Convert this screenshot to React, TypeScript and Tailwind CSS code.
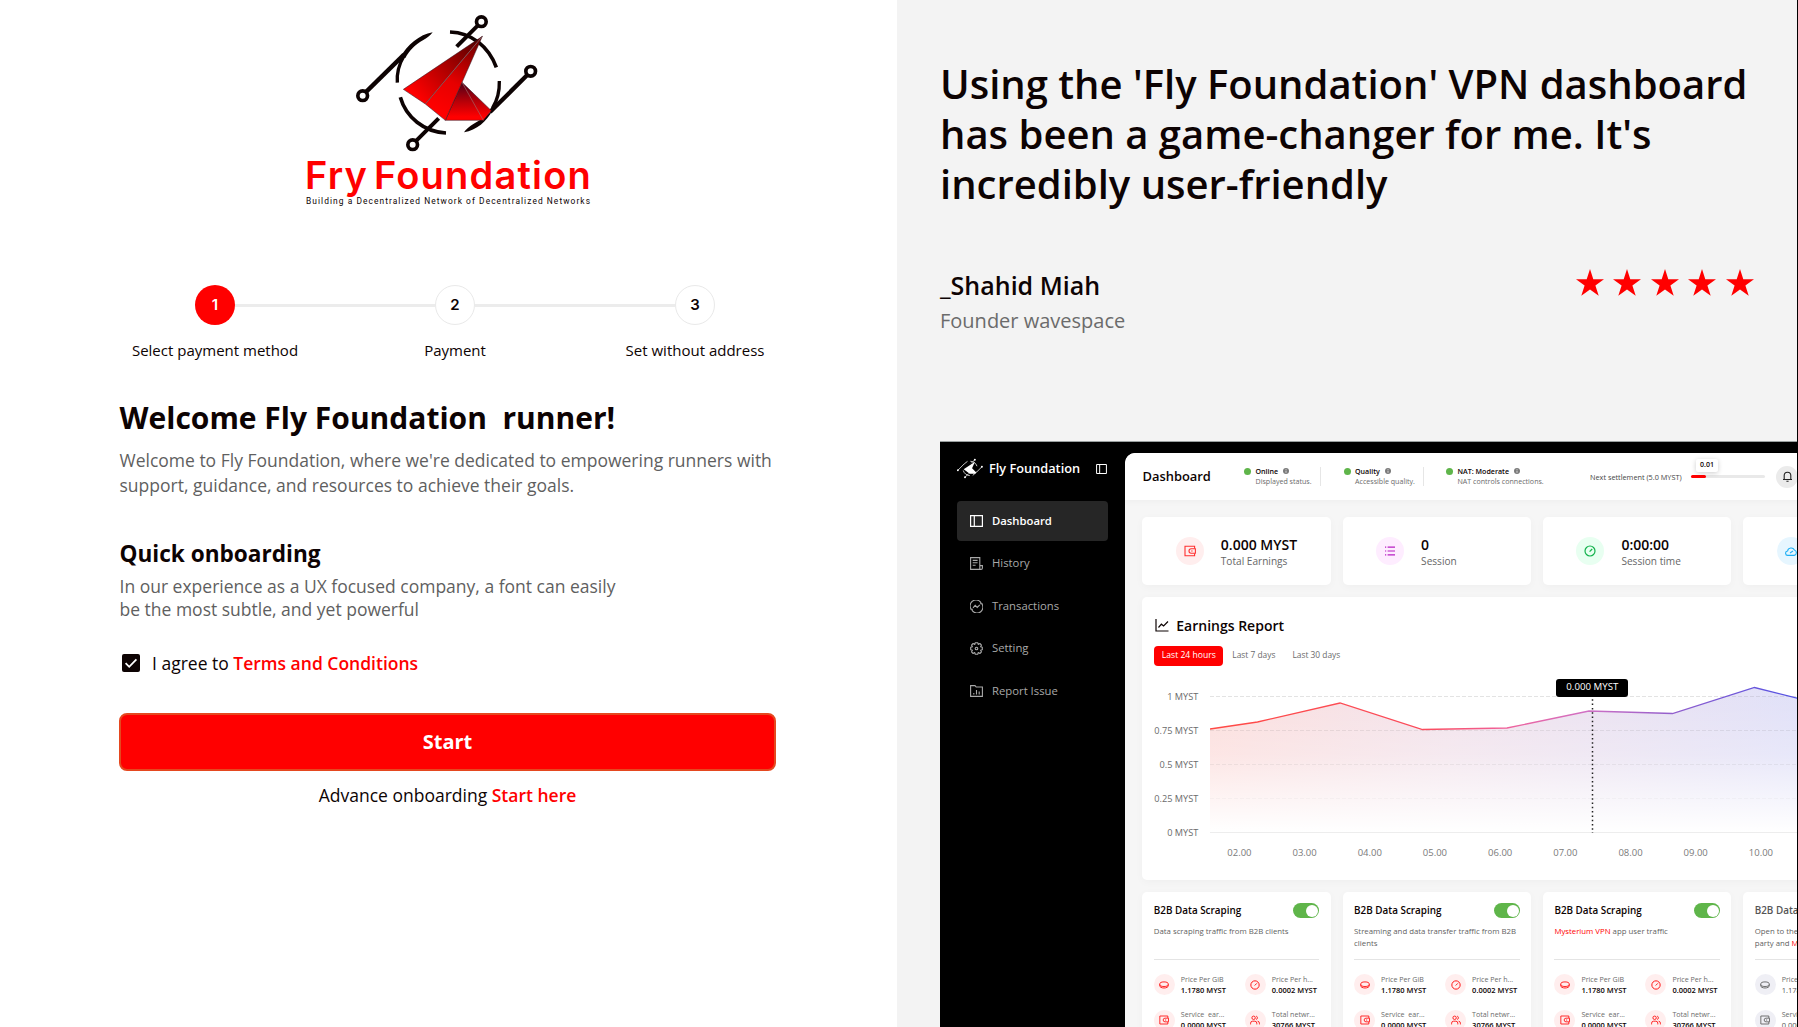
import React from "react";

function Logo() {
  return (
    <svg className="ml-[3px] block h-[160px] w-[320px]" viewBox="0 0 960 480" fill="none">
      <defs>
        <linearGradient id="wingA" x1="380" y1="290" x2="560" y2="130" gradientUnits="userSpaceOnUse">
          <stop offset="0" stopColor="#ff0000" />
          <stop offset="0.55" stopColor="#a80000" />
          <stop offset="1" stopColor="#5a0000" />
        </linearGradient>
        <linearGradient id="wingB" x1="450" y1="340" x2="570" y2="120" gradientUnits="userSpaceOnUse">
          <stop offset="0" stopColor="#ff0000" />
          <stop offset="0.4" stopColor="#e60000" />
          <stop offset="1" stopColor="#6a0000" />
        </linearGradient>
        <linearGradient id="wingC" x1="520" y1="250" x2="520" y2="350" gradientUnits="userSpaceOnUse">
          <stop offset="0" stopColor="#520018" />
          <stop offset="0.55" stopColor="#b80008" />
          <stop offset="1" stopColor="#ff0000" />
        </linearGradient>
      </defs>
      <g stroke="#0d0303" strokeWidth="11">
        <circle cx="574" cy="65" r="14.5" />
        <circle cx="722" cy="214" r="14.5" />
        <circle cx="218" cy="287" r="14.5" />
        <circle cx="368" cy="434" r="14.5" />
        <path d="M563 77 500 140" strokeWidth="12" />
        <path d="M711 226 600 336" strokeWidth="13" />
        <path d="M229 275 342 164" strokeWidth="13" />
        <path d="M379 422 446 355" strokeWidth="12" />
        <path d="M480 96 C545 98 596 140 619 202" />
        <path d="M331 292 C348 352 402 396 468 399" />
        <path d="M342 168 C326 194 320 220 322 248" strokeWidth="10" />
        <path d="M628 243 C629 275 621 303 607 325" strokeWidth="10" />
      </g>
      <g fill="#0d0303">
        <path d="M330 174 C352 134 388 104 428 97 C420 108 410 114 400 120 C375 134 358 152 346 174Z" />
        <path d="M522 397 C535 378 560 366 585 352 L608 330 C590 365 560 390 522 397Z" />
      </g>
      <g stroke="#2b1420" strokeWidth="1.5" strokeLinejoin="round">
        <path d="M516 247 604 332 580 361 466 361Z" fill="url(#wingC)" />
        <path d="M577 109 340 268 406 312Z" fill="url(#wingA)" />
        <path d="M577 109 406 312 466 361Z" fill="url(#wingB)" />
      </g>
      <path d="M577 109 406 312M516 247 580 361" stroke="#a06a6a" strokeWidth="2" />
    </svg>
  );
}

function Step({ n, label, active }: { n: number; label: string; active?: boolean }) {
  return (
    <div className="flex w-10 flex-col items-center">
      <div
        className={
          active
            ? "flex h-10 w-10 items-center justify-center rounded-full bg-[#ff0000] font-['Inter',sans-serif] text-[15px] font-semibold text-white"
            : "flex h-10 w-10 items-center justify-center rounded-full border border-[#e9e9e9] bg-white font-['Inter',sans-serif] text-[15px] font-semibold text-[#0d0303]"
        }
      >
        {n}
      </div>
      <div className="mt-[14px] text-[15px] leading-[22px] whitespace-nowrap text-[#0d0303]">{label}</div>
    </div>
  );
}

function LeftPanel() {
  return (
    <section className="flex h-full w-[897px] shrink-0 flex-col bg-white">
      <div className="flex h-[215px] flex-col items-center">
        <Logo />
        <div className="-mt-[2px] font-['Inter',sans-serif] text-[38px] leading-[34px] font-semibold tracking-[1.2px] [word-spacing:-5px] whitespace-nowrap text-[#ff0000]">
          Fry Foundation
        </div>
        <div className="mt-[3px] font-['Roboto',sans-serif] text-[8.4px] leading-[12px] tracking-[1.07px] whitespace-nowrap text-[#0d0303]">
          Building a Decentralized Network of Decentralized Networks
        </div>
      </div>
      <div className="ml-[195px] mt-[70px] flex h-[80px] w-[520px] items-start">
        <Step n={1} label="Select payment method" active />
        <div className="mt-[19px] h-[3px] flex-1 bg-[#ececec]" />
        <Step n={2} label="Payment" />
        <div className="mt-[19px] h-[3px] flex-1 bg-[#ececec]" />
        <Step n={3} label="Set without address" />
      </div>
      <div className="ml-[119px] w-[657px] text-[#0d0303]">
        <h1 className="mt-[32px] ml-[0.5px] h-[41px] text-[30px] leading-[41px] font-bold whitespace-pre">Welcome Fly Foundation  runner!</h1>
        <p className="mt-[10px] ml-[0.5px] text-[17.5px] leading-[25px] whitespace-nowrap text-[#5f5f5f]">
          Welcome to Fly Foundation, where we're dedicated to empowering runners with
          <br />
          support, guidance, and resources to achieve their goals.
        </p>
        <h2 className="mt-[40px] ml-[0.5px] text-[22.6px] leading-[32px] font-bold">Quick onboarding</h2>
        <p className="mt-[5px] ml-[0.5px] text-[17.5px] leading-[23px] whitespace-nowrap text-[#5f5f5f]">
          In our experience as a UX focused company, a font can easily
          <br />
          be the most subtle, and yet powerful
        </p>
        <div className="mt-[28px] flex h-[28px] items-center text-[17.5px] leading-[26px]">
          <svg className="ml-[3px] mr-3 h-[18px] w-[18px]" viewBox="0 0 18 18" fill="none">
            <rect width="18" height="18" rx="2" fill="#0d0303" />
            <path d="M3.6 9.2 7.2 12.8 14.4 5.4" stroke="#fff" strokeWidth="1.8" />
          </svg>
          <span className="whitespace-pre">I agree to </span>
          <span className="font-semibold text-[#ff0000]">Terms and Conditions</span>
        </div>
        <button className="mt-[36px] flex h-[58px] w-full items-center justify-center rounded-[8px] border-2 border-[#e5481f] bg-[#ff0000] text-[20px] font-bold text-white">
          Start
        </button>
        <div className="mt-[11px] text-center text-[17.5px] leading-[26px]">
          Advance onboarding <span className="font-semibold text-[#ff0000]">Start here</span>
        </div>
      </div>
    </section>
  );
}

function Star() {
  return (
    <svg className="h-[27px] w-[28px]" viewBox="0 0 28 27" fill="#ff0000">
      <path d="M14 0 17.3 10.2H28L19.4 16.5 22.7 26.7 14 20.4 5.3 26.7 8.6 16.5 0 10.2H10.7Z" />
    </svg>
  );
}

function PanelIcon({ className }: { className: string }) {
  return (
    <svg className={className} viewBox="0 0 13 12" fill="none" stroke="currentColor" strokeWidth="1.2">
      <path d="M.6.6H12.4V11.4H.6ZM4.3.6V11.4" />
    </svg>
  );
}
function HistoryIcon() {
  return (
    <svg className="h-[13px] w-[13px] shrink-0" viewBox="0 0 13 13" fill="none" stroke="currentColor" strokeWidth="1.1">
      <path d="M9.8 8V.6H.6V12.4H11a1.4 1.4 0 0 0 1.4-1.4V8.6H9.8V12M2.7 3.4H7.6M2.7 5.8H7.6M2.7 8.2H5.6" />
    </svg>
  );
}
function TransactionsIcon() {
  return (
    <svg className="h-[13px] w-[13px] shrink-0" viewBox="0 0 13 13" fill="none" stroke="currentColor" strokeWidth="1.1">
      <path d="M1.4 9.6A5.9 5.9 0 0 1 10.6 2.2M11.6 3.4A5.9 5.9 0 0 1 2.4 10.8M3 7.8 5.2 5.4 7.2 7.4 9.8 4.8M.4 9.2H2.2V11M12.6 3.8H10.8V2" />
    </svg>
  );
}
function GearIcon() {
  return (
    <svg className="h-[13px] w-[13px] shrink-0" viewBox="0 0 13 13" fill="none" stroke="currentColor" strokeWidth="1.1" strokeLinejoin="round">
      <path d="M5.3.7H7.7L8.2 2.4 9.9 1.5 11.5 3.1 10.6 4.8 12.3 5.3V7.7L10.6 8.2 11.5 9.9 9.9 11.5 8.2 10.6 7.7 12.3H5.3L4.8 10.6 3.1 11.5 1.5 9.9 2.4 8.2.7 7.7V5.3L2.4 4.8 1.5 3.1 3.1 1.5 4.8 2.4Z" />
      <circle cx="6.5" cy="6.5" r="1.3" />
    </svg>
  );
}
function ReportIcon() {
  return (
    <svg className="h-[12px] w-[13px] shrink-0" viewBox="0 0 13 12" fill="none" stroke="currentColor" strokeWidth="1.1">
      <path d="M.6.6H5L6.2 2H12.4V11.4H.6ZM3.8 9.6V8M6.5 9.6V5M9.2 9.6V6.4" />
    </svg>
  );
}
function WalletIcon({ className }: { className: string }) {
  return (
    <svg className={className} viewBox="0 0 12 12" fill="none" stroke="currentColor" strokeWidth="1.1">
      <path d="M10.6 3.6V1.2H1V10.8H10.6V8.4" />
      <path d="M11.4 3.8H7.2A2.1 2.1 0 0 0 7.2 8.2H11.4ZM7.2 6H8.6" />
    </svg>
  );
}
function ListIcon() {
  return (
    <svg className="h-[12px] w-[12px]" viewBox="0 0 12 12" fill="none" stroke="#b81fc4" strokeWidth="1.2">
      <path d="M1 2.2H2.2M3.6 2.2H11M1 6H2.2M3.6 6H11M1 9.8H2.2M3.6 9.8H11" />
    </svg>
  );
}
function GaugeIcon({ className }: { className: string }) {
  return (
    <svg className={className} viewBox="0 0 12 12" fill="none" stroke="currentColor" strokeWidth="1.2">
      <circle cx="6" cy="6" r="5" />
      <path d="M5.6 6.6 8.2 4" />
    </svg>
  );
}
function CloudIcon() {
  return (
    <svg className="h-[12px] w-[12px]" viewBox="0 0 12 12" fill="none" stroke="#1fb0f5" strokeWidth="1.1">
      <path d="M3 10.4A2.2 2.2 0 0 1 2.6 6 3.6 3.6 0 0 1 9.4 5 2.8 2.8 0 0 1 9.2 10.4ZM5 8 8 6" />
    </svg>
  );
}
function CoinIcon() {
  return (
    <svg className="h-[10px] w-[10px]" viewBox="0 0 10 10" fill="none" stroke="currentColor" strokeWidth="0.95">
      <ellipse cx="5" cy="4.2" rx="4.3" ry="2.3" />
      <path d="M.7 4.4V5.8C.7 7 2.6 8 5 8S9.3 7 9.3 5.8V4.4" />
    </svg>
  );
}
function PeopleIcon() {
  return (
    <svg className="h-[10px] w-[10px]" viewBox="0 0 10 10" fill="none" stroke="currentColor" strokeWidth="0.95">
      <circle cx="3.6" cy="2.8" r="1.7" />
      <path d="M.6 9.4V8.2A2 2 0 0 1 2.6 6.2H4.8A2 2 0 0 1 6.8 8.2V9.4M6.2 1.1A1.8 1.8 0 0 1 6.2 4.5M7.6 6.2A2 2 0 0 1 9.4 8.2V9.4" />
    </svg>
  );
}

function NavItem({ icon, label, active }: { icon: React.ReactNode; label: string; active?: boolean }) {
  return (
    <div
      className={
        active
          ? "flex h-10 items-center rounded-[4px] bg-[#262626] pl-[13px] text-[11.3px] font-semibold text-white"
          : "flex h-10 items-center pl-[13px] text-[11.3px] text-[#a9a9a9]"
      }
    >
      {icon}
      <span className="ml-[9px] whitespace-nowrap">{label}</span>
    </div>
  );
}

function Sidebar() {
  return (
    <aside className="w-[185px] shrink-0 px-[17px] pt-[14px]">
      <div className="mb-[20px] flex h-[25px] items-center text-white">
        <svg className="h-[21px] w-[26px] shrink-0" viewBox="200 40 545 420" fill="none">
          <g stroke="#fff" strokeWidth="16">
            <path d="M218 287 350 155M722 214 604 332M574 65 500 140M368 434 446 355M350 155 420 100M480 98C545 100 596 140 619 202M331 292C348 352 402 396 468 399M530 395 610 325" />
          </g>
          <circle cx="574" cy="65" r="20" fill="#fff" />
          <circle cx="722" cy="214" r="20" fill="#fff" />
          <circle cx="218" cy="287" r="20" fill="#fff" />
          <circle cx="368" cy="434" r="20" fill="#fff" />
          <path d="M577 109 340 268 466 361H580L604 332 516 247Z" fill="#fff" />
        </svg>
        <span className="mt-px ml-[6px] text-[12.75px] font-semibold whitespace-nowrap">Fly Foundation</span>
        <PanelIcon className="ml-auto mr-px h-[10px] w-[11px] shrink-0" />
      </div>
      <nav className="flex flex-col gap-[2.6px]">
        <NavItem active label="Dashboard" icon={<PanelIcon className="h-[12px] w-[13px] shrink-0" />} />
        <NavItem label="History" icon={<HistoryIcon />} />
        <NavItem label="Transactions" icon={<TransactionsIcon />} />
        <NavItem label="Setting" icon={<GearIcon />} />
        <NavItem label="Report Issue" icon={<ReportIcon />} />
      </nav>
    </aside>
  );
}

function Status({ title, text, className }: { title: string; text: string; className: string }) {
  return (
    <div className={className}>
      <span className="mt-[2px] h-[7px] w-[7px] shrink-0 rounded-full bg-[#5fb54a]" />
      <div className="ml-[4.5px] whitespace-nowrap">
        <div className="flex items-center text-[7.1px] leading-[10px] font-semibold text-[#0d0303]">
          {title}
          <svg className="ml-[5px] h-[6px] w-[6px]" viewBox="0 0 6 6">
            <circle cx="3" cy="3" r="3" fill="#7a7a7a" />
            <path d="M3 1.2V2M3 2.6V4.8" stroke="#fff" strokeWidth=".7" />
          </svg>
        </div>
        <div className="text-[7.1px] leading-[10px] text-[#6b6b6b]">{text}</div>
      </div>
    </div>
  );
}

function TopBar() {
  return (
    <header className="flex h-[47px] w-[720px] shrink-0 items-start rounded-tl-[8px] bg-white pl-[17.5px] shadow-[0_2px_6px_rgba(0,0,0,0.03)]">
      <div className="mt-[12px] w-[101.5px] text-[12.9px] leading-[23px] font-semibold text-[#0d0303]">Dashboard</div>
      <Status className="mt-[13px] flex w-[75.5px] items-start" title="Online" text="Displayed status." />
      <div className="mt-[14px] h-[19px] w-px bg-[#e6e6e6]" />
      <Status className="mt-[13px] ml-[23px] flex w-[79px] items-start" title="Quality" text="Accessible quality." />
      <div className="mt-[14px] h-[19px] w-px bg-[#e6e6e6]" />
      <Status className="mt-[13px] ml-[22.5px] flex w-[144px] items-start" title="NAT: Moderate" text="NAT controls connections." />
      <div className="mt-[18px] w-[101px] text-[7.3px] leading-[12px] whitespace-nowrap text-[#454545]">Next settlement (5.0 MYST)</div>
      <div className="relative mt-[22px] h-[3px] w-[74px] rounded-full bg-[#e9e9e9]">
        <div className="h-[3px] w-[15px] rounded-full bg-[#ff0000]" />
        <div className="absolute -top-[16px] left-[5px] flex h-[13px] w-[22px] items-center justify-center rounded-[2px] bg-white text-[7px] font-semibold text-[#0d0303] shadow-[0_1px_5px_rgba(0,0,0,0.2)]">
          0.01
        </div>
      </div>
      <div className="mt-[12.5px] ml-[11px] flex h-[22px] w-[22px] items-center justify-center rounded-full bg-[#ebebeb]">
        <svg className="h-[11px] w-[11px]" viewBox="0 0 11 11" fill="none" stroke="#222" strokeWidth="1.1">
          <path d="M1 8.5H10M2.2 8.5V4.6A3.3 3.3 0 0 1 8.8 4.6V8.5M4.4 10.3H6.6" />
        </svg>
      </div>
    </header>
  );
}

function Stat({ tint, icon, value, label }: { tint: string; icon: React.ReactNode; value: string; label: string }) {
  return (
    <div className="flex h-[68px] w-[188.5px] shrink-0 items-center rounded-[5px] bg-white pl-[33.5px] shadow-[0_2px_8px_rgba(0,0,0,0.03)]">
      <div className={tint}>{icon}</div>
      <div className="mt-[2px] ml-[17px] whitespace-nowrap">
        <div className="text-[14px] leading-[18px] font-semibold text-[#0d0303]">{value}</div>
        <div className="text-[10.1px] leading-[15px] text-[#666]">{label}</div>
      </div>
    </div>
  );
}

function Chart() {
  const line = "M0 46 47.5 39 130 20 212.5 46.5 297 45 379 28 462.5 30.5 544.5 4.5 588.5 15.5";
  return (
    <svg className="block h-[155px] w-[588px]" viewBox="0 0 588 155" fill="none">
      <defs>
        <linearGradient id="stroke" x1="0" y1="0" x2="588" y2="0" gradientUnits="userSpaceOnUse">
          <stop offset="0" stopColor="#ff4a45" />
          <stop offset="0.36" stopColor="#fb4c5c" />
          <stop offset="0.5" stopColor="#f0629a" />
          <stop offset="0.64" stopColor="#d070c4" />
          <stop offset="0.78" stopColor="#9560cc" />
          <stop offset="1" stopColor="#5050e4" />
        </linearGradient>
        <linearGradient id="area" x1="0" y1="0" x2="588" y2="0" gradientUnits="userSpaceOnUse">
          <stop offset="0" stopColor="#fbd5d3" />
          <stop offset="0.4" stopColor="#efdbe6" />
          <stop offset="1" stopColor="#d8d8f6" />
        </linearGradient>
        <linearGradient id="fade" x1="0" y1="20" x2="0" y2="149" gradientUnits="userSpaceOnUse">
          <stop offset="0" stopColor="#fff" stopOpacity="0.25" />
          <stop offset="0.4" stopColor="#fff" stopOpacity="0.4" />
          <stop offset="1" stopColor="#fff" />
        </linearGradient>
      </defs>
      <path d={line + "V149.5H0Z"} fill="url(#area)" />
      <path d="M0 13.5H588M0 47.5H588M0 81.5H588M0 115.5H588" stroke="#000" strokeOpacity=".11" strokeDasharray="4 2" />
      <path d={line + "V149.5H0Z"} fill="url(#fade)" />
      <path d="M0 149.5H588" stroke="#ededed" />
      <path d={line} stroke="url(#stroke)" strokeWidth="1.3" />
      <path d="M382.5 12V150" stroke="#222" strokeWidth="1.5" strokeDasharray="1.5 2.8" />
    </svg>
  );
}

function Earnings() {
  return (
    <section className="h-[283px] w-[720px] rounded-tl-[5px] rounded-bl-[5px] bg-white pl-[12px] shadow-[0_2px_8px_rgba(0,0,0,0.03)]">
      <div className="flex h-[57px] items-center text-[14px] font-semibold text-[#0d0303]">
        <svg className="ml-[1px] h-[13px] w-[14px]" viewBox="0 0 14 13" fill="none" stroke="#0d0303" strokeWidth="1.2">
          <path d="M1 0V12H13.5M3.5 8.5 6.4 5.2 8.6 7 13 2.5" />
        </svg>
        <span className="ml-[7px]">Earnings Report</span>
      </div>
      <div className="-mt-[8px] flex h-[19.5px] items-center text-[8.4px] text-[#6b6b6b]">
        <span className="flex h-[19.5px] w-[69px] items-center justify-center rounded-[4px] bg-[#ff0000] text-[8.6px] font-medium text-white">Last 24 hours</span>
        <span className="ml-[9px]">Last 7 days</span>
        <span className="ml-[17px]">Last 30 days</span>
      </div>
      <div className="mt-[17.5px] flex">
        <div className="mt-[7px] flex h-[149px] w-[44px] flex-col items-end justify-between text-[9.2px] leading-[13px] whitespace-nowrap text-[#6b6b6b]">
          <span>1 MYST</span>
          <span>0.75 MYST</span>
          <span>0.5 MYST</span>
          <span>0.25 MYST</span>
          <span>0 MYST</span>
        </div>
        <div className="relative ml-[11.5px]">
          <Chart />
          <div className="absolute -top-[4px] left-[346.5px] flex h-[17.5px] w-[72px] items-center justify-center rounded-[3px] bg-black text-[9.7px] text-white">
            0.000 MYST
          </div>
        </div>
      </div>
      <div className="mt-[7px] ml-[52.5px] flex text-center text-[9.5px] leading-[14px] text-[#7a7a7a]">
        {["02.00", "03.00", "04.00", "05.00", "06.00", "07.00", "08.00", "09.00", "10.00"].map((t) => (
          <span key={t} className="w-[65.2px]">{t}</span>
        ))}
      </div>
    </section>
  );
}

function Metric({ icon, label, value, off }: { icon: React.ReactNode; label: string; value: string; off?: boolean }) {
  return (
    <div className="flex h-[21px] items-center">
      <div
        className={
          off
            ? "flex h-[21px] w-[21px] shrink-0 items-center justify-center rounded-full bg-[#efeff5] text-[#666]"
            : "flex h-[21px] w-[21px] shrink-0 items-center justify-center rounded-full bg-[#ffeeee] text-[#ff1a1a]"
        }
      >
        {icon}
      </div>
      <div className="ml-[6px] whitespace-pre">
        <div className="text-[7.1px] leading-[11px] text-[#6b6b6b]">{label}</div>
        <div className={off ? "text-[7.5px] leading-[11px] text-[#555]" : "text-[7.5px] leading-[11px] font-semibold text-[#0d0303]"}>{value}</div>
      </div>
    </div>
  );
}

function Service({ desc, off }: { desc: React.ReactNode; off?: boolean }) {
  return (
    <div className="h-[160px] w-[188.5px] shrink-0 rounded-[5px] bg-white px-[11.5px] pt-[11px] shadow-[0_2px_8px_rgba(0,0,0,0.03)]">
      <div className="flex h-[15px] items-center justify-between">
        <span className={off ? "text-[9.9px] font-semibold whitespace-nowrap text-[#555]" : "text-[9.9px] font-semibold whitespace-nowrap text-[#0d0303]"}>
          B2B Data Scraping
        </span>
        <span className="flex h-[15px] w-[26px] shrink-0 items-center justify-end rounded-full bg-[#5fb54a] pr-[1px]">
          <span className="h-[12px] w-[12px] rounded-full bg-white" />
        </span>
      </div>
      <div className="mt-[8px] h-[33px] text-[7.8px] leading-[11.5px] whitespace-nowrap text-[#5f5f5f]">{desc}</div>
      <div className="h-px bg-[#e4e4e4]" />
      <div className="mt-[14px] grid grid-cols-[91px_1fr] gap-y-[14.5px]">
        <Metric off={off} icon={<CoinIcon />} label="Price Per GiB" value="1.1780 MYST" />
        <Metric off={off} icon={<GaugeIcon className="h-[10px] w-[10px]" />} label="Price Per h..." value="0.0002 MYST" />
        <Metric off={off} icon={<WalletIcon className="h-[10px] w-[10px]" />} label="Service  ear..." value="0.0000 MYST" />
        <Metric off={off} icon={<PeopleIcon />} label="Total netwr..." value="30766 MYST" />
      </div>
    </div>
  );
}

function Dashboard() {
  return (
    <div className="flex h-[586px] w-[858px] overflow-hidden border-t border-[#9aa0a0] bg-black">
      <Sidebar />
      <div className="mt-[11px] flex w-[673px] shrink-0 flex-col overflow-hidden rounded-tl-[10px] bg-[#f6f6f6]">
        <TopBar />
        <div className="flex flex-col gap-[12px] pt-[17px] pl-[17.3px]">
          <div className="flex gap-[11.8px]">
            <Stat tint="flex h-7 w-7 items-center justify-center rounded-full bg-[#ffeeee] text-[#ff3030]" icon={<WalletIcon className="h-[12px] w-[12px]" />} value="0.000 MYST" label="Total Earnings" />
            <Stat tint="flex h-7 w-7 items-center justify-center rounded-full bg-[#feedff]" icon={<ListIcon />} value="0" label="Session" />
            <Stat tint="flex h-7 w-7 items-center justify-center rounded-full bg-[#e8fff1] text-[#12b24c]" icon={<GaugeIcon className="h-[12px] w-[12px]" />} value="0:00:00" label="Session time" />
            <Stat tint="flex h-7 w-7 items-center justify-center rounded-full bg-[#e6f6ff]" icon={<CloudIcon />} value="0.00 GB" label="Transferred" />
          </div>
          <Earnings />
          <div className="flex gap-[11.8px]">
            <Service desc="Data scraping traffic from B2B clients" />
            <Service desc={<>Streaming and data transfer traffic from B2B<br />clients</>} />
            <Service desc={<><span className="text-[#ff0000]">Mysterium VPN</span> app user traffic</>} />
            <Service off desc={<>Open to the public<br />party and <span className="text-[#ff0000]">Mysterium</span></>} />
          </div>
        </div>
      </div>
    </div>
  );
}

export default function App() {
  return (
    <main className="flex h-[1027px] w-[1798px] overflow-hidden font-['Open_Sans',sans-serif]">
      <LeftPanel />
      <section className="flex h-full w-[901px] flex-col overflow-hidden border-r border-black bg-[#f3f3f3] pl-[43px]">
        <h2 className="mt-[59px] text-[40px] leading-[50px] font-semibold whitespace-nowrap text-[#0d0303]">
          Using the 'Fly Foundation' VPN dashboard
          <br />
          has been a game-changer for me. It's
          <br />
          incredibly user-friendly
        </h2>
        <div className="mt-[59px] flex h-[72px] items-start">
          <div className="w-[635.5px]">
            <div className="-mt-px text-[25px] leading-[36px] font-semibold text-[#0d0303]">_Shahid Miah</div>
            <div className="mt-[2px] text-[20px] leading-[32px] text-[#6b6b6b]">Founder wavespace</div>
          </div>
          <div className="mt-[1px] flex gap-[9.5px]">
            <Star />
            <Star />
            <Star />
            <Star />
            <Star />
          </div>
        </div>
        <div className="mt-[101px]">
          <Dashboard />
        </div>
      </section>
    </main>
  );
}
